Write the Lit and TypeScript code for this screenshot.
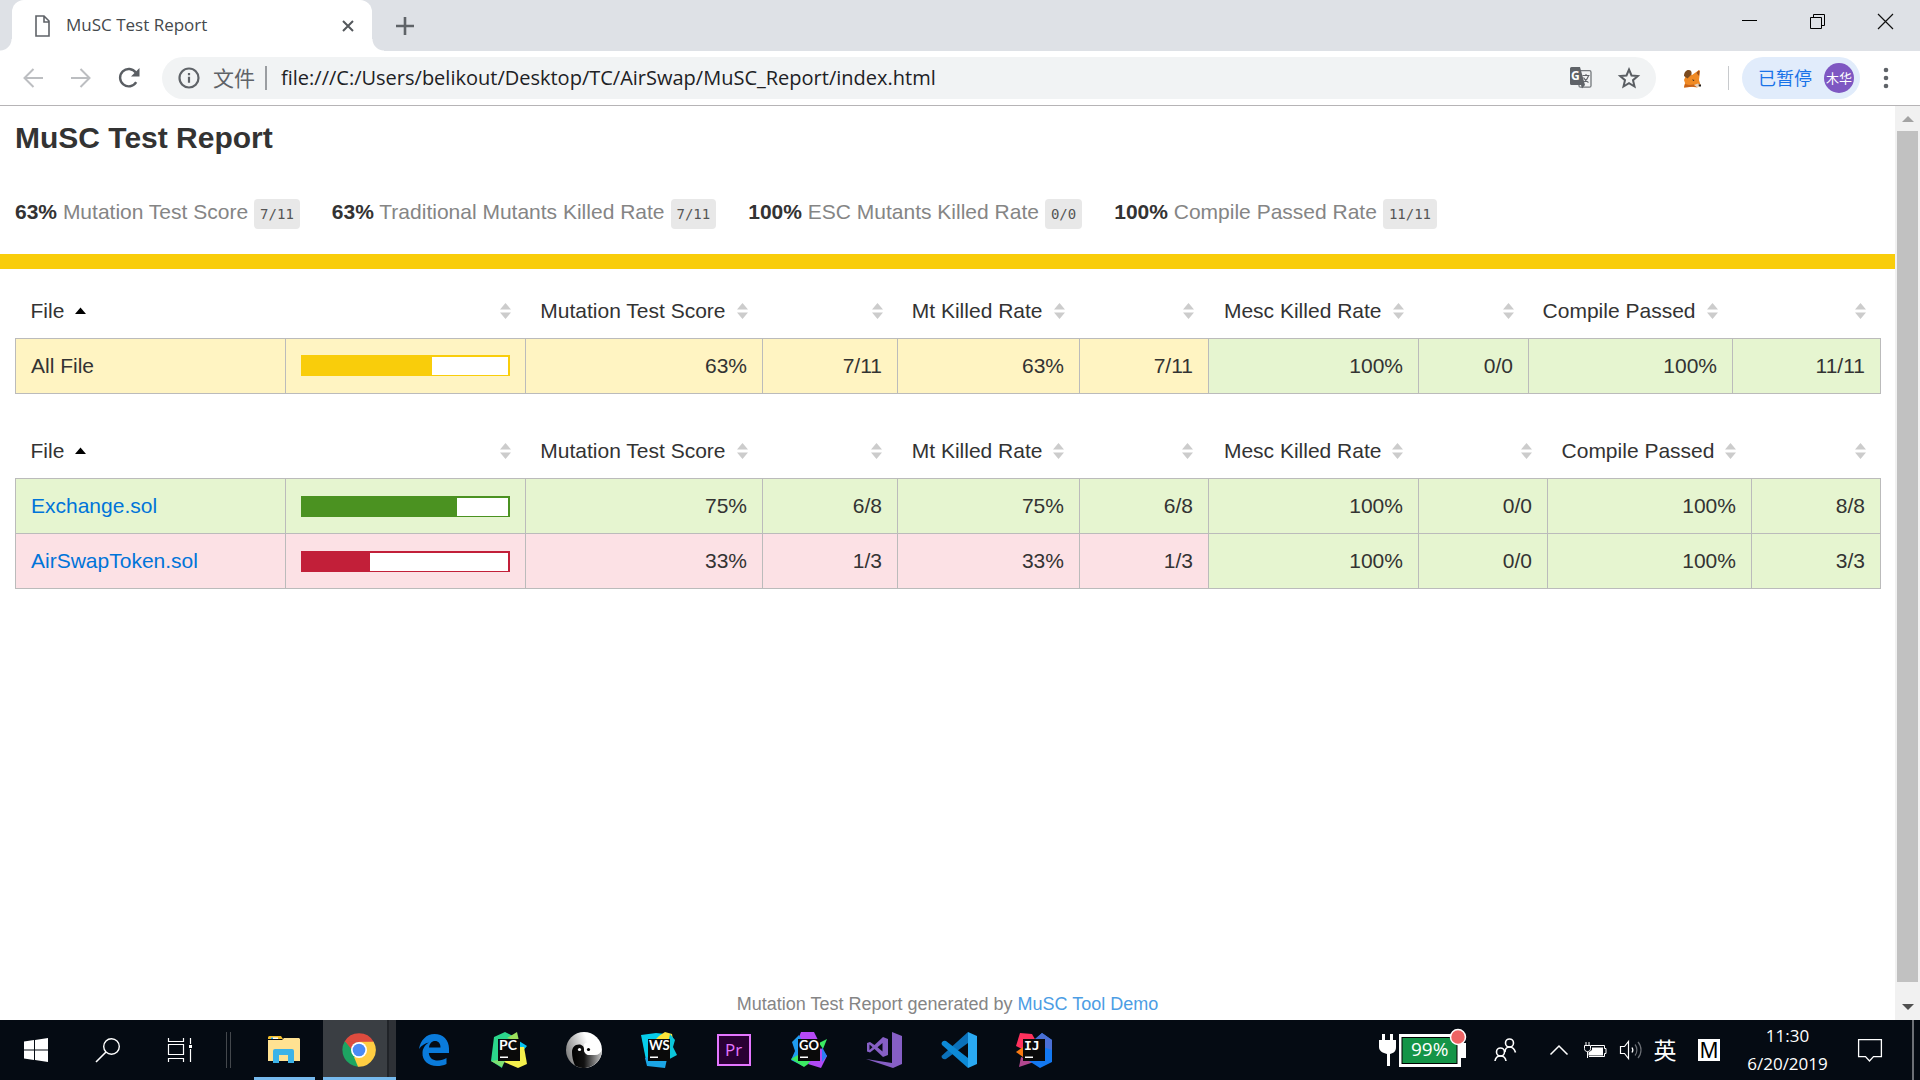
import { LitElement, html, css, svg, nothing, TemplateResult } from "lit";
import { customElement, property } from "lit/decorators.js";
import { styleMap } from "lit/directives/style-map.js";

type Level = "high" | "medium" | "low";

interface Row {
  file: string;
  link?: boolean;
  level: Level;
  percent: number;
  cells: { text: string; level: Level }[];
}

interface Column {
  label: string;
  weight: number;
}

const icon = (w: number, h: number, body: TemplateResult, box = `0 0 ${w} ${h}`) =>
  html`<svg width=${w} height=${h} viewBox=${box} fill="none" aria-hidden="true">${body}</svg>`;

const columns = (weights: number[]): Column[] =>
  ["File", "", "Mutation Test Score", "", "Mt Killed Rate", "", "Mesc Killed Rate", "", "Compile Passed", ""].map(
    (label, i) => ({ label, weight: weights[i] })
  );

const cellsOf = (level: Level, rate: string, count: string, mesc: string, compiled: string) => [
  { text: rate, level },
  { text: count, level },
  { text: rate, level },
  { text: count, level },
  { text: "100%", level: "high" as Level },
  { text: mesc, level: "high" as Level },
  { text: "100%", level: "high" as Level },
  { text: compiled, level: "high" as Level },
];

const sharedStyles = css`
  * {
    box-sizing: border-box;
  }
  button {
    border: 0;
    padding: 0;
    margin: 0;
    background: none;
    color: inherit;
    font: inherit;
    display: flex;
    align-items: center;
    justify-content: center;
  }
  svg {
    display: block;
    flex: none;
    overflow: visible;
  }
`;

@customElement("browser-chrome")
export class BrowserChrome extends LitElement {
  static styles = [
    sharedStyles,
    css`
      :host {
        display: block;
        font-family: "Open Sans", "Noto Sans CJK SC", sans-serif;
        color: #5f6368;
      }
      .strip {
        display: flex;
        height: 51px;
        background: #dee1e6;
        padding-left: 12px;
      }
      .tab {
        position: relative;
        display: flex;
        align-items: center;
        width: 360px;
        padding: 0 16px 0 22px;
        background: #fff;
        border-radius: 12px 12px 0 0;
        font-size: 17px;
        line-height: 24px;
        color: #45494d;
      }
      .tab::before,
      .tab::after {
        content: "";
        position: absolute;
        bottom: 0;
        width: 12px;
        height: 12px;
      }
      .tab::before {
        left: -12px;
        background: radial-gradient(circle at 0 0, #dee1e6 11px, #fff 12px);
      }
      .tab::after {
        right: -12px;
        background: radial-gradient(circle at 100% 0, #dee1e6 11px, #fff 12px);
      }
      .title {
        flex: 1;
        margin-left: 16px;
        padding-bottom: 2px;
      }
      .close {
        width: 16px;
        height: 24px;
      }
      .plus {
        width: 66px;
      }
      .controls {
        display: flex;
        margin-left: auto;
        padding-right: 1px;
        height: 42px;
      }
      .controls button {
        width: 68px;
      }
      .bar {
        display: flex;
        align-items: center;
        height: 55px;
        padding: 0 9px;
        background: #fff;
        border-bottom: 1px solid #b6b4b6;
      }
      .nav {
        width: 48px;
        height: 42px;
      }
      .omni {
        flex: 1;
        display: flex;
        align-items: center;
        height: 42px;
        margin-left: 9px;
        padding: 0 15px 0 16px;
        border-radius: 21px;
        background: #f1f3f4;
      }
      .scheme {
        margin: 0 10px 0 13px;
        padding-bottom: 2px;
        font: 21px/30px "Noto Sans CJK SC", sans-serif;
      }
      .rule {
        width: 2px;
        height: 24px;
        background: #9a9da1;
      }
      .url {
        flex: 1;
        min-width: 0;
        border: 0;
        outline: 0;
        padding: 0;
        margin: 0 14px;
        background: none;
        color: #202124;
        font: 20px/30px "Open Sans", sans-serif;
      }
      .omni button {
        width: 24px;
        margin-left: 24px;
      }
      .fox {
        width: 72px;
        padding-right: 1px;
      }
      .divider {
        width: 1px;
        height: 24px;
        background: #c8cacd;
      }
      .profile {
        height: 42px;
        margin-left: 13px;
        padding: 0 6px 0 16px;
        gap: 12px;
        border-radius: 21px;
        background: #e1ecfb;
        color: #1a73e8;
        font: 18px/26px "Noto Sans CJK SC", sans-serif;
      }
      .paused {
        padding-bottom: 2px;
      }
      .avatar {
        width: 30px;
        height: 30px;
        border-radius: 50%;
        background: #7e57c2;
        color: #fff;
        font-size: 13px;
        line-height: 29px;
        text-align: center;
      }
      .menu {
        width: 51px;
        height: 42px;
      }
    `,
  ];

  render() {
    return html`
      <div class="strip">
        <div class="tab">
          ${icon(16, 22, svg`<path d="M2 1h8l5 5v15H2zM10 1v6h5" stroke="#5f6368" stroke-width="1.6"/>`)}
          <span class="title">MuSC Test Report</span>
          <button class="close" aria-label="Close tab">
            ${icon(12, 12, svg`<path d="M1 1l10 10M11 1L1 11" stroke="#54585c" stroke-width="2"/>`)}
          </button>
        </div>
        <button class="plus" aria-label="New tab">
          ${icon(18, 18, svg`<path d="M9 0v18M0 9h18" stroke="#5f6368" stroke-width="2.6"/>`)}
        </button>
        <div class="controls">
          <button aria-label="Minimize">${icon(15, 15, svg`<path d="M0 6.5h15" stroke="#000"/>`)}</button>
          <button aria-label="Restore">
            ${icon(15, 15, svg`<path d="M.5 3.5h11v11H.5zM3.5 3V.5h11v11H12" stroke="#000"/>`)}
          </button>
          <button aria-label="Close">${icon(15, 15, svg`<path d="M0 0l15 15M15 0L0 15" stroke="#111" stroke-width="1.2"/>`)}</button>
        </div>
      </div>
      <div class="bar">
        <button class="nav" aria-label="Back">
          ${icon(20, 20, svg`<path d="M20 10H2M10.5 1L1.5 10l9 9" stroke="#bcbec1" stroke-width="2"/>`)}
        </button>
        <button class="nav" aria-label="Forward">
          ${icon(20, 20, svg`<path d="M0 10h18M9.5 1l9 9-9 9" stroke="#bcbec1" stroke-width="2"/>`)}
        </button>
        <button class="nav" aria-label="Reload">
          ${icon(
            22,
            22,
            svg`<path d="M18.2 15.2A8.7 8.7 0 1 1 17.8 5.5" stroke="#5a5e63" stroke-width="2.4"/><path d="M21.5 1v8.5H13z" fill="#5a5e63"/>`
          )}
        </button>
        <div class="omni">
          ${icon(
            22,
            22,
            svg`<circle cx="11" cy="11" r="9.5" stroke="#5f6368" stroke-width="2.2"/><path d="M11 9.8v6M11 6v2.2" stroke="#5f6368" stroke-width="2.2"/>`
          )}
          <label class="scheme" for="address">文件</label>
          <span class="rule"></span>
          <input
            class="url"
            id="address"
            type="text"
            value="file:///C:/Users/belikout/Desktop/TC/AirSwap/MuSC_Report/index.html"
          />
          <button aria-label="Translate">
            ${icon(
              22,
              22,
              svg`<rect x="9" y="3.7" width="12" height="16.5" rx="1.5" stroke="#74787c" stroke-width="1.3"/>
                <path d="M1.5 0H10l5 18H1.5A1.5 1.5 0 0 1 0 16.5v-15A1.5 1.5 0 0 1 1.5 0z" fill="#5f6368"/>
                <path d="M11 18h4l-3 3.5z" fill="#5f6368"/>
                <path d="M12.5 8.5h7M16 7v1.5M18.5 9c-.8 2.5-2.5 4.5-4.5 5.5M13.5 10.5c1 2 3 4 5 5" stroke="#5f6368" stroke-width="1.1"/>
                <text x="1" y="13" font-family="Open Sans" font-size="12" font-weight="700" fill="#fff">G</text>`
            )}
          </button>
          <button aria-label="Bookmark this page">
            ${icon(
              22,
              22,
              svg`<path d="M11 2.5l2.5 6 6.3.5-4.8 4.2 1.5 6.3L11 16.2l-5.5 3.3L7 13.2 2.2 9l6.3-.5z" stroke="#5a5e63" stroke-width="2"/>`
            )}
          </button>
        </div>
        <button class="fox" aria-label="MetaMask">
          ${icon(
            18,
            19,
            svg`<path d="M4 4l5 2 7-5 1 1-1 9 1.5 5L14 18.5l-5-.8-8 .8L2 14 1 11z" fill="#f08a24"/>
              <path d="M1 7c0-3.5 2-6 4.5-6S9 3 8.5 5.500L4.500 9.500z" fill="#7b4a1e"/>
              <path d="M15.5 1.5l1 .5-.5 5-2.500-3z" fill="#9a501f"/>
              <path d="M2 15l4 1 5-.5 3 2.5-5-.3-8 .8z" fill="#c9641a"/>
              <path d="M11 16l4-1.5 2.5 1.5-3 2.5z" fill="#e4d3c4"/>
              <path d="M15.5 15.5h2.5v2h-2zM9 10.500l2.500.5-1 1z" fill="#23201e"/>`
          )}
        </button>
        <span class="divider"></span>
        <button class="profile">
          <span class="paused">已暂停</span>
          <span class="avatar">木华</span>
        </button>
        <button class="menu" aria-label="Menu">
          ${icon(
            6,
            22,
            svg`<g fill="#5f6368"><circle cx="3" cy="3" r="2.3"/><circle cx="3" cy="11" r="2.3"/><circle cx="3" cy="19" r="2.3"/></g>`
          )}
        </button>
      </div>
    `;
  }
}

@customElement("coverage-table")
export class CoverageTable extends LitElement {
  @property({ attribute: false }) columns: Column[] = [];
  @property({ attribute: false }) rows: Row[] = [];

  static styles = [
    sharedStyles,
    css`
      :host {
        display: block;
      }
      table {
        width: 100%;
        table-layout: fixed;
        border-collapse: collapse;
      }
      th {
        height: 54px;
        padding: 0 15px;
        font-weight: 400;
        white-space: nowrap;
      }
      th button {
        width: 100%;
        justify-content: flex-end;
        gap: 11px;
        line-height: 24px;
      }
      th:first-child button {
        justify-content: flex-start;
      }
      td {
        height: 55px;
        padding: 0 15px;
        border: 1px solid #bbb;
        line-height: 24px;
        text-align: right;
      }
      td:first-child {
        text-align: left;
      }
      .high {
        background: #e6f5d0;
      }
      .medium {
        background: #fff4c2;
      }
      .low {
        background: #fce1e5;
      }
      a {
        color: #0074d9;
        text-decoration: none;
      }
      .chart {
        height: 21px;
        border: solid;
        border-width: 2px 2px 1px 1px;
        background: #fff;
      }
      .fill {
        height: 100%;
      }
      .chart-high {
        border-color: #4b9221;
      }
      .chart-medium {
        border-color: #f9cd0b;
      }
      .chart-low {
        border-color: #c21f39;
      }
      .chart-high .fill {
        background: #4b9221;
      }
      .chart-medium .fill {
        background: #f9cd0b;
      }
      .chart-low .fill {
        background: #c21f39;
      }
    `,
  ];

  private sorter(index: number) {
    return index === 0
      ? icon(11, 16, svg`<path d="M5.5 4.5L11 11H0z" fill="#000"/>`)
      : icon(11, 16, svg`<path d="M5.5 0L11 6.5H0zM5.5 16L0 9.5h11z" fill="#ccc"/>`);
  }

  render() {
    const total = this.columns.reduce((sum, c) => sum + c.weight, 0);
    return html`
      <table>
        <colgroup>
          ${this.columns.map((c) => html`<col style=${styleMap({ width: `${(c.weight / total) * 100}%` })} />`)}
        </colgroup>
        <thead>
          <tr>
            ${this.columns.map(
              (c, i) => html`<th scope="col">
                <button aria-label=${c.label || nothing}>${c.label ? html`<span>${c.label}</span>` : nothing}${this.sorter(i)}</button>
              </th>`
            )}
          </tr>
        </thead>
        <tbody>
          ${this.rows.map(
            (r) => html`<tr>
              <td class=${r.level}>${r.link ? html`<a href="#">${r.file}</a>` : r.file}</td>
              <td class=${r.level}>
                <div class="chart chart-${r.level}">
                  <div class="fill" style=${styleMap({ width: `${r.percent}%` })}></div>
                </div>
              </td>
              ${r.cells.map((c) => html`<td class=${c.level}>${c.text}</td>`)}
            </tr>`
          )}
        </tbody>
      </table>
    `;
  }
}

@customElement("report-page")
export class ReportPage extends LitElement {
  static styles = [
    sharedStyles,
    css`
      :host {
        display: flex;
        flex-direction: column;
        min-width: 0;
        background: #fff;
        color: #333;
        font: 21px/30px "Liberation Sans", Arial, sans-serif;
      }
      h1 {
        margin: 0;
        padding: 17px 15px 0;
        font-size: 30px;
        line-height: 30px;
      }
      .stats {
        display: flex;
        flex-wrap: wrap;
        gap: 32px;
        padding: 46px 15px 25px;
      }
      .stat {
        display: flex;
        align-items: center;
        gap: 6px;
      }
      .name {
        color: #858585;
        line-height: 26px;
        padding-bottom: 4px;
      }
      .name strong {
        color: #333;
      }
      .fraction {
        padding: 0 6px;
        border-radius: 4px;
        background: #e8e8e8;
        color: #555;
        font: 14px/30px "DejaVu Sans Mono", monospace;
      }
      .status {
        height: 15px;
        background: #f9cd0b;
      }
      .tables {
        display: grid;
        gap: 31px;
        padding: 15px 14px 15px 15px;
      }
      footer {
        margin-top: auto;
        padding-bottom: 3px;
        color: #858585;
        font-size: 18px;
        line-height: 26px;
        text-align: center;
      }
      footer a {
        color: #4c9de4;
        text-decoration: none;
      }
    `,
  ];

  private stats = [
    ["63%", "Mutation Test Score", "7/11"],
    ["63%", "Traditional Mutants Killed Rate", "7/11"],
    ["100%", "ESC Mutants Killed Rate", "0/0"],
    ["100%", "Compile Passed Rate", "11/11"],
  ];

  private summaryColumns = columns([270, 240, 237, 135, 182, 129, 210, 110, 204, 148]);
  private fileColumns = columns([270, 240, 237, 135, 182, 129, 210, 129, 204, 129]);

  private summary: Row[] = [
    { file: "All File", level: "medium", percent: 63, cells: cellsOf("medium", "63%", "7/11", "0/0", "11/11") },
  ];

  private files: Row[] = [
    { file: "Exchange.sol", link: true, level: "high", percent: 75, cells: cellsOf("high", "75%", "6/8", "0/0", "8/8") },
    { file: "AirSwapToken.sol", link: true, level: "low", percent: 33, cells: cellsOf("low", "33%", "1/3", "0/0", "3/3") },
  ];

  render() {
    return html`
      <h1>MuSC Test Report</h1>
      <div class="stats">
        ${this.stats.map(
          ([rate, name, fraction]) => html`<div class="stat">
            <span class="name"><strong>${rate}</strong> ${name}</span>
            <span class="fraction">${fraction}</span>
          </div>`
        )}
      </div>
      <div class="status"></div>
      <div class="tables">
        <coverage-table .columns=${this.summaryColumns} .rows=${this.summary}></coverage-table>
        <coverage-table .columns=${this.fileColumns} .rows=${this.files}></coverage-table>
      </div>
      <footer>Mutation Test Report generated by <a href="#">MuSC Tool Demo</a></footer>
    `;
  }
}

const jetbrains = (shapes: TemplateResult, letters: string, family = "Lato", size = 13) =>
  icon(
    36,
    36,
    svg`${shapes}<rect x="7" y="7" width="22" height="22" fill="#0a0a0a"/>
      <text x="8" y="18" font-family=${family} font-size=${size} font-weight="700" fill="#fff">${letters}</text>
      <rect x="9" y="24.5" width="8" height="1.5" fill="#fff"/>`
  );

@customElement("desktop-taskbar")
export class DesktopTaskbar extends LitElement {
  static styles = [
    sharedStyles,
    css`
      :host {
        display: flex;
        height: 60px;
        background: #050b13;
        color: #fff;
        font-family: "Open Sans", "Noto Sans CJK SC", sans-serif;
      }
      .system {
        width: 72px;
      }
      .grip {
        display: flex;
        align-items: center;
        justify-content: center;
        width: 31px;
        padding-right: 6px;
      }
      .app {
        position: relative;
        width: 75px;
        padding: 0 2px 1px 0;
      }
      .active {
        background: #3a3e43;
        border-left: 1px solid #050b13;
        border-right: 1px solid #050b13;
      }
      .running::after {
        content: "";
        position: absolute;
        left: 7px;
        right: 7px;
        bottom: 0;
        height: 3px;
        background: #76b9ed;
      }
      .active::before {
        content: "";
        position: absolute;
        right: 0;
        top: 0;
        bottom: 0;
        width: 7px;
        background: #2e3136;
        border-left: 2px solid #202328;
      }
      .active::after {
        left: 0;
        right: 0;
      }
      .tray {
        display: flex;
        margin-left: auto;
      }
      .power {
        width: 90px;
        margin-right: 13px;
      }
      .people {
        width: 48px;
        margin-right: 12px;
      }
      .small {
        width: 36px;
      }
      .lang {
        width: 34px;
        padding: 0 2px 2px 0;
        font: 23px/32px "Noto Sans CJK SC", sans-serif;
      }
      .ime {
        width: 52px;
        margin-right: 5px;
      }
      .mode {
        width: 22px;
        background: #fff;
        color: #000;
        font: 21px/22px "Noto Sans", sans-serif;
      }
      .clock {
        width: 96px;
        padding-right: 1px;
        flex-direction: column;
        font-size: 17px;
        line-height: 28px;
      }
      .notes {
        width: 68px;
        margin-right: 8px;
      }
      .desktop {
        width: 8px;
        border-left: 2px solid #6c7076;
      }
    `,
  ];

  private apps: { name: string; cls: string; art: TemplateResult }[] = [
    {
      name: "File Explorer",
      cls: "app running",
      art: icon(
        32,
        28,
        svg`<path d="M0 1.5A1.5 1.5 0 0 1 1.5 0H13l2 3H0z" fill="#f5c12d"/><path d="M3 1.5h7v1.5H3z" fill="#fff"/><path d="M3 1.5h2v1.5H3z" fill="#2aa4e0"/>
          <path d="M0 4h14l2-2h15l1 1v22H0z" fill="#ffe292"/><path d="M5 27V15q0-2 2-2h17q2 0 2 2v12h-6v-8h-9v8z" fill="#3cb3e8"/>`
      ),
    },
    {
      name: "Google Chrome",
      cls: "app running active",
      art: icon(
        34,
        34,
        svg`<path d="M17 17L2.5 8.7A16.8 16.8 0 0 1 31.6 8.7z" fill="#dd4b3e"/>
          <path d="M17 17L2.5 8.7A16.8 16.8 0 0 0 16 33.7z" fill="#1da462"/>
          <path d="M17 17L31.6 8.7A16.8 16.8 0 0 1 16 33.7z" fill="#ffcd42"/>
          <path d="M17 8.7h14.6L24 20z" fill="#ffcd42"/><path d="M2.5 8.7L9.8 21l5-12z" fill="#1da462"/><path d="M24.2 21L16 33.7 12 24z" fill="#ffcd42"/>
          <path d="M3 8.2l7 8.8a7 7 0 0 1 7-8.1h14z" fill="#dd4b3e"/>
          <circle cx="17" cy="17" r="8" fill="#fff"/><circle cx="17" cy="17" r="6.3" fill="#4a8af4"/>`
      ),
    },
    {
      name: "Microsoft Edge",
      cls: "app",
      art: icon(
        30,
        32,
        svg`<path d="M0 15C1.5 6 7.5 0 15.5 0 24 0 30 6 30 14.5V19H9.8c.4 5 4.2 7.5 9 7.5 3.5 0 6.2-1 8.7-2.5v6c-3 1.5-6.2 2-9.5 2C9 32 3 26.5 3.5 18.5 3.8 14 6.5 10.5 10 8.5 6 9 2.5 11.5 0 15zM10 13.5h11.5c0-4-2-6.5-5.5-6.5-3.2 0-5.5 2.5-6 6.5z" fill="#0a7bdb"/>`
      ),
    },
    {
      name: "PyCharm",
      cls: "app",
      art: jetbrains(
        svg`<path d="M3 5L14 0l8 4-8 14-3 18L0 29z" fill="#2bd68b"/><path d="M16 6L26 0l2 9z" fill="#9be05c"/><path d="M28 9l8 5-6 7z" fill="#07c3f2"/><path d="M29 15h4l3 17-9 4-14-6 4-12z" fill="#f5f04c"/><path d="M0 29l11 6 4-8z" fill="#7fe072"/>`,
        "PC",
        "Lato",
        14
      ),
    },
    {
      name: "Yin Yang",
      cls: "app",
      art: icon(
        36,
        36,
        svg`<defs><linearGradient id="yang" x1="0" y1=".6" x2=".8" y2=".3"><stop offset="0" stop-color="#808080"/><stop offset=".8" stop-color="#fff"/></linearGradient><linearGradient id="yin" x1="0" x2="1" y1="0" y2="0"><stop offset="0" stop-color="#000"/><stop offset=".4" stop-color="#111"/><stop offset="1" stop-color="#c8c8c8"/></linearGradient></defs>
          <circle cx="18" cy="18" r="18" fill="url(#yang)"/>
          <path d="M9 33.5A18 18 0 0 0 36 17c-1 4-3.5 6-7 6h-5c-4 0-6-2-6-6 0-3-2.5-4.5-5-4.5C8.500 12.500 6 16 6 20c0 5 1 9 3 13.500z" fill="url(#yin)"/>
          <path d="M18 13c0-2 3-3 9-2 2 5 2 12-3 12-3 0-6-2-6-6z" fill="#fff"/>
          <circle cx="22.5" cy="17.5" r="1.6" fill="#000"/><circle cx="13.5" cy="17.5" r="1.6" fill="#fff"/>`
      ),
    },
    {
      name: "WebStorm",
      cls: "app",
      art: jetbrains(
        svg`<path d="M0 3L15 1l10 1-2 10-10 18-8-2z" fill="#07cdea"/><path d="M18 4l6-4 7 2 1 6H14z" fill="#fce53a"/><path d="M29 2l5 6-2 7 4 8-13 7z" fill="#0bc6da"/><path d="M4 26l8-3 14 4-2 9-18-2z" fill="#1ba6e6"/>`,
        "WS"
      ),
    },
    {
      name: "Premiere Pro",
      cls: "app",
      art: icon(
        34,
        32,
        svg`<rect x="1" y="1" width="32" height="30" fill="#2a0034" stroke="#e476ff" stroke-width="2"/><text x="8" y="22" font-family="Open Sans" font-size="17" fill="#e476ff">Pr</text>`
      ),
    },
    {
      name: "GoLand",
      cls: "app",
      art: jetbrains(
        svg`<path d="M10 0h13l4 8-8 12L4 15z" fill="#b74af7"/><path d="M8 3L1 10l3 9-4 9 12 6 6-12z" fill="#1f9cf0"/><path d="M0 27l13 8 7-5-8-10z" fill="#3bea62"/><path d="M28 11l8-4-4 10z" fill="#3bea62"/><path d="M30 16l6 8-6 12-13-4 8-10z" fill="#b04af5"/><path d="M31 15l5 9-5 6z" fill="#2b7ff5"/>`,
        "GO"
      ),
    },
    {
      name: "Visual Studio",
      cls: "app",
      art: icon(
        36,
        36,
        svg`<path d="M26 0l10 4v28l-9 4L0 27l26 4z" fill="#865fc5"/><path d="M1 11l3-1 4.5 3L17 5l5 2v16l-5 2-8.5-8L4 20.5l-3-1zM3.5 12.5v5.5l3-2.7zM11.5 15.3l5 4.2v-8.4z" fill="#865fc5" fill-rule="evenodd"/>`
      ),
    },
    {
      name: "Visual Studio Code",
      cls: "app",
      art: icon(
        36,
        36,
        svg`<path d="M1 23.5L27 0v11L5 27q-2 1-4-1-1-1.3 0-2.5z" fill="#0b71ba"/><path d="M1 10q2-2 4-1l22 17v10L1 13q-1-1.5 0-3z" fill="#0d8ad6"/><path d="M27 0l9 4v28l-9 4z" fill="#2aa9f2"/>`
      ),
    },
    {
      name: "IntelliJ IDEA",
      cls: "app",
      art: jetbrains(
        svg`<path d="M4 1l12 1 4 7-12 9-8-4z" fill="#fe315d"/><path d="M0 20l7-5v10z" fill="#f97a12"/><path d="M5 25l13 5-15 5z" fill="#b2478f"/><path d="M18 8l8-7 10 7v22l-12 6-11-7z" fill="#1378f0"/><path d="M18 8l8-7 10 7v10l-9-3z" fill="#4a6fd4"/>`,
        "IJ",
        "DejaVu Sans Mono"
      ),
    },
  ];

  render() {
    return html`
      <button class="system" aria-label="Start">
        ${icon(24, 24, svg`<path d="M0 3.5l10-1.4v9.4H0zM11 2l13-2v11.5H11zM0 12.5h10v9.4L0 20.5zM11 12.5h13V24l-13-2z" fill="#fff"/>`)}
      </button>
      <button class="system" aria-label="Search">
        ${icon(24, 24, svg`<circle cx="15.5" cy="8.5" r="7.8" stroke="#fff" stroke-width="1.4"/><path d="M10 14L0 24" stroke="#fff" stroke-width="1.6"/>`)}
      </button>
      <button class="system" aria-label="Task View">
        ${icon(
          24,
          24,
          svg`<path d="M.5 0v3.5h15V0M.5 6.5h15v10H.5zM.5 24v-3.5h15V24M22.5 0v6M22.5 11v13" stroke="#fff" stroke-width="1.2"/><path d="M21 7h3v3h-3z" fill="#fff"/>`
        )}
      </button>
      <span class="grip">${icon(5, 36, svg`<path d="M.5 0v36M4.5 0v36" stroke="#44484d"/>`)}</span>
      ${this.apps.map((a) => html`<button class=${a.cls} aria-label=${a.name}>${a.art}</button>`)}
      <div class="tray">
        <button class="power" aria-label="Battery level">
          ${icon(
            90,
            40,
            svg`<path d="M4 4h3v6h5V4h3v6h3v7c0 4-2 6-6 7v12H9V24c-4-1-8-3-8-7v-7h3z" fill="#fff"/>
              <path d="M21 4h61v9h6v15h-5v9H21z" fill="#fff"/><rect x="24" y="7.5" width="55" height="26" fill="#149447" stroke="#000"/>
              <text x="33" y="26" font-family="Open Sans" font-size="19" fill="#fff">99%</text>
              <circle cx="80" cy="7" r="7.5" fill="#ee6464" stroke="#fff" stroke-width="1.5"/>`
          )}
        </button>
        <button class="people" aria-label="People">
          ${icon(
            22,
            24,
            svg`<g stroke="#fff" stroke-width="1.6"><circle cx="15.5" cy="5" r="4"/><circle cx="6.5" cy="14" r="4"/><path d="M11 14c0-3 2-5 4.5-5s5 2 6 5.5M1 23c.5-3.5 2.5-5 5.5-5s5 1.5 5.5 5"/></g>`
          )}
        </button>
        <button class="small" aria-label="Show hidden icons">
          ${icon(18, 10, svg`<path d="M.5 9.5L9 1l8.5 8.5" stroke="#fff" stroke-width="1.5"/>`)}
        </button>
        <button class="small" aria-label="Power">
          ${icon(
            24,
            17,
            svg`<path d="M8 3.5h13.5v3H23v5h-1.5v3H6" stroke="#fff"/><path d="M9 5.5h11v8H5.5v-3L9 8z" fill="#fff"/><path d="M1.5 3.5h6v3c0 2-1 3-3 3s-3-1-3-3zM3 3V0M6 3V0M4.5 10v6" stroke="#fff" fill="#050b13"/>`
          )}
        </button>
        <button class="small" aria-label="Volume">
          ${icon(
            24,
            20,
            svg`<path d="M1.5 6.5h4l4-5v17l-4-5h-4z" stroke="#fff" stroke-width="1.2"/><path d="M13 7.5c1 1.5 1 3.5 0 5" stroke="#fff" stroke-width="1.3"/><path d="M16 4.5c2.5 3 2.5 8 0 11M19 2c4 4.5 4 11.5 0 16" stroke="#6b6f75" stroke-width="1.2"/>`
          )}
        </button>
        <button class="lang">英</button>
        <button class="ime"><span class="mode">M</span></button>
        <button class="clock"><span>11:30</span><span>6/20/2019</span></button>
        <button class="notes" aria-label="Notifications">
          ${icon(24, 24, svg`<path d="M.6 1.6h22.8v17H15.5L11.5 23l-4-4.400H.6z" stroke="#fff" stroke-width="1.3"/>`)}
        </button>
        <button class="desktop" aria-label="Show desktop"></button>
      </div>
    `;
  }
}

@customElement("app-root")
export class AppRoot extends LitElement {
  static styles = [
    sharedStyles,
    css`
      :host {
        display: flex;
        flex-direction: column;
        min-height: 100vh;
      }
      main {
        flex: 1;
        display: flex;
      }
      report-page {
        flex: 1;
      }
      .scroll {
        display: grid;
        grid-template-rows: 25px 65fr 1fr 25px;
        width: 25px;
        padding: 0 2px;
        background: #f1f1f1;
      }
      .thumb {
        background: #c1c1c1;
      }
      .down {
        grid-row: 4;
      }
    `,
  ];

  render() {
    return html`
      <browser-chrome></browser-chrome>
      <main>
        <report-page></report-page>
        <div class="scroll">
          <button aria-label="Scroll up">${icon(12, 6, svg`<path d="M6 0l6 6H0z" fill="#a3a3a3"/>`)}</button>
          <div class="thumb"></div>
          <button class="down" aria-label="Scroll down">${icon(12, 6, svg`<path d="M6 6L0 0h12z" fill="#505050"/>`)}</button>
        </div>
      </main>
      <desktop-taskbar></desktop-taskbar>
    `;
  }
}
